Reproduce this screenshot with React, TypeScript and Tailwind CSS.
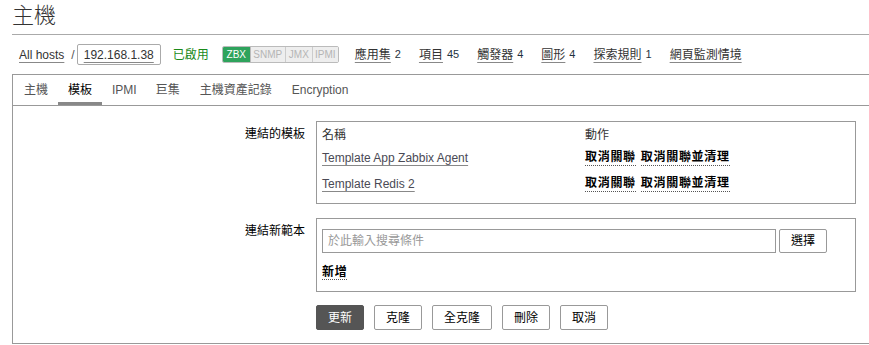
import React from "react"

const font = { fontFamily: '"Liberation Sans", Arial, "Noto Sans CJK TC", sans-serif' }

type NavLink = { label: string; count?: string }

const navLinks: NavLink[] = [
  { label: "應用集", count: "2" },
  { label: "項目", count: "45" },
  { label: "觸發器", count: "4" },
  { label: "圖形", count: "4" },
  { label: "探索規則", count: "1" },
  { label: "網頁監測情境" },
]

const tabs = ["主機", "模板", "IPMI", "巨集", "主機資產記錄", "Encryption"]

const templates = ["Template App Zabbix Agent", "Template Redis 2"]

const buttons = ["克隆", "全克隆", "刪除", "取消"]

function DotLink({ children }: { children: React.ReactNode }) {
  return (
    <span className="font-bold text-black tracking-[0.7px] border-b border-dotted border-[#555] leading-[15px]">
      {children}
    </span>
  )
}

export default function App() {
  return (
    <div className="w-[869px] h-[345px] overflow-hidden bg-white text-[12px] text-[#333]" style={font}>
      {/* header */}
      <div className="ml-3 h-[35px] border-b border-[#aaa] flex items-start">
        <h1 className="text-[22px] leading-[30px] pt-[1px] text-[#333] font-light">主機</h1>
      </div>

      {/* breadcrumbs */}
      <div className="ml-[19px] h-[39px] flex items-center text-[12px]">
        <span className="underline underline-offset-[3px] decoration-[#888]">All hosts</span>
        <span className="ml-[7px] text-[#555]">/</span>
        <span className="ml-[2px] h-[21px] px-[6px] flex items-center border border-[#aaa] rounded-[2px]">
          <span className="underline underline-offset-[3px] decoration-[#888]">192.168.1.38</span>
        </span>
        <span className="ml-[12px] text-[#1a8a1a]">已啟用</span>
        <span className="ml-[13px] flex h-[17px] text-[10px] leading-[15px] border border-[#bbb] rounded-[2px] overflow-hidden">
          <span className="px-[3px] bg-[#2ea35c] text-white border-r border-[#bbb] w-[28px] text-center">ZBX</span>
          <span className="bg-[#eee] text-[#b5b5b5] border-r border-[#ccc] w-[35px] text-center">SNMP</span>
          <span className="bg-[#eee] text-[#b5b5b5] border-r border-[#ccc] w-[27px] text-center">JMX</span>
          <span className="bg-[#eee] text-[#b5b5b5] w-[25px] text-center">IPMI</span>
        </span>
        <div className="ml-[16px] flex gap-[18px]">
          {navLinks.map((l) => (
            <span key={l.label} className="flex items-center gap-[4px]">
              <span className="underline underline-offset-[3px] decoration-[#888]">{l.label}</span>
              {l.count && <span className="text-[11px] text-[#1f3340]">{l.count}</span>}
            </span>
          ))}
        </div>
      </div>

      {/* tabbed container */}
      <div className="ml-3 h-[270px] border-l border-t border-b border-[#999]">
        <div className="h-[31px] border-b border-[#999] flex pl-[11px]">
          {tabs.map((t) => {
            const active = t === "模板"
            return (
              <div
                key={t}
                className={`h-[30px] flex items-center px-[10px] first:pl-0 first:pr-[10px] ${
                  active ? "text-black border-b-[3px] border-[#888] pt-[3px]" : "text-[#555]"
                } ${t === "IPMI" ? "pr-[9px] pl-[10px]" : ""}`}
              >
                {t}
              </div>
            )
          })}
        </div>

        <div className="pt-[15px] grid grid-cols-[292px_540px] gap-x-[11px]">
          {/* linked templates */}
          <div className="text-right text-black pt-[4px]">連結的模板</div>
          <div className="border border-[#999] px-[5px] pt-[1px] pb-[5px]">
            <div className="h-[23px] flex items-center">
              <span className="w-[263px]">名稱</span>
              <span>動作</span>
            </div>
            {templates.map((t, i) => (
              <div key={t} className={`${i === 0 ? "h-[24px]" : "h-[28px]"} flex items-center`}>
                <span className="w-[263px]">
                  <span className="text-[#4a4a55] underline underline-offset-[3px] decoration-[#888]">{t}</span>
                </span>
                <span className="flex gap-[5px]">
                  <DotLink>取消關聯</DotLink>
                  <DotLink>取消關聯並清理</DotLink>
                </span>
              </div>
            ))}
          </div>

          {/* link new template */}
          <div className="text-right text-black pt-[4px] mt-[14px]">連結新範本</div>
          <div className="mt-[14px] border border-[#999] px-[5px] pt-[10px] h-[74px]">
            <div className="flex gap-[3px]">
              <div className="w-[454px] h-[24px] border border-[#999] flex items-center px-[5px] text-[#999]">
                於此輸入搜尋條件
              </div>
              <button className="w-[48px] h-[24px] border border-[#999] rounded-[2px] bg-white text-black">
                選擇
              </button>
            </div>
            <div className="mt-[10px] h-[16px]">
              <DotLink>新增</DotLink>
            </div>
          </div>

          {/* buttons */}
          <div />
          <div className="mt-[13px] flex gap-[10px]">
            <button className="h-[25px] w-[48px] bg-[#555] text-white border border-[#555] rounded-[2px]">
              更新
            </button>
            {buttons.map((b) => (
              <button
                key={b}
                className={`h-[25px] ${b === "全克隆" ? "w-[60px]" : "w-[48px]"} bg-white text-black border border-[#999] rounded-[2px]`}
              >
                {b}
              </button>
            ))}
          </div>
        </div>
      </div>
    </div>
  )
}
